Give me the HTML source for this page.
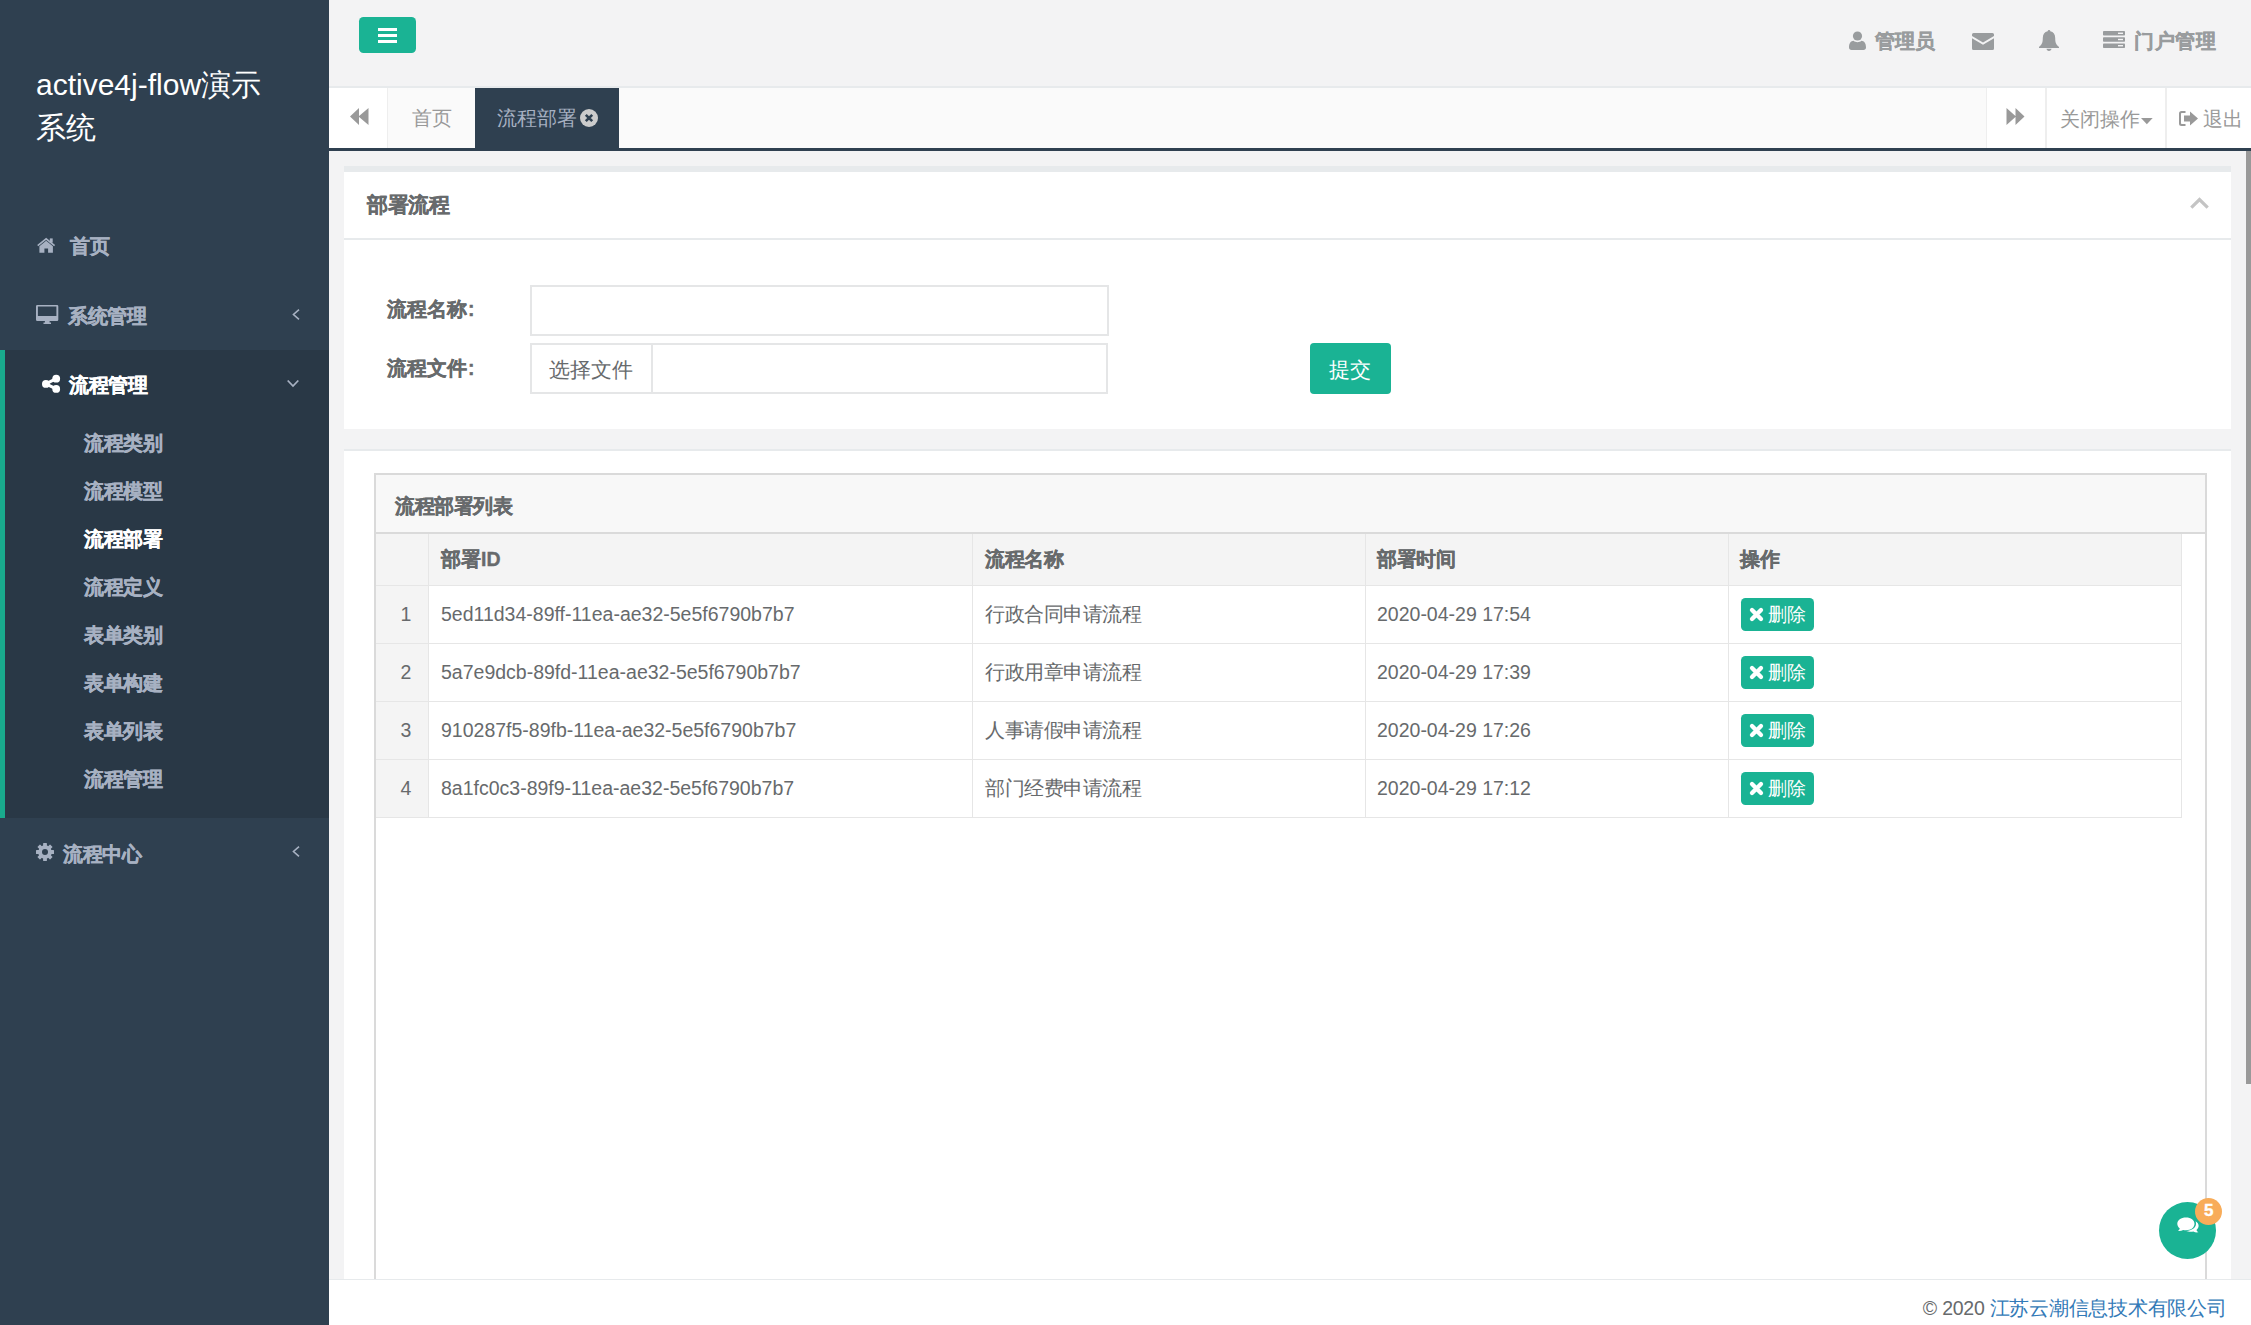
<!DOCTYPE html>
<html><head><meta charset="utf-8">
<style>
*{box-sizing:border-box;margin:0;padding:0}
html,body{width:2251px;height:1325px;overflow:hidden;background:#f3f3f4;font-family:"Liberation Sans",sans-serif;color:#676a6c;font-size:19.5px}
.a{position:absolute;white-space:nowrap;line-height:1}
.b{font-weight:bold;-webkit-text-stroke:0.35px}
.r{position:absolute}
svg{position:absolute;overflow:visible}
.nav{color:#a7b1c2;font-weight:bold;-webkit-text-stroke:0.35px;letter-spacing:-0.5px}
</style></head><body>
<!-- sidebar -->
<div class="r" style="left:0;top:0;width:329px;height:1325px;background:#2f4050"></div>
<div class="r" style="left:0;top:350px;width:329px;height:468px;background:#293846"></div>
<div class="r" style="left:0;top:350px;width:5px;height:468px;background:#19aa8d"></div>
<div class="a" style="left:36px;top:62.8px;font-size:30px;color:#fff;line-height:43px">active4j-flow演示<br>系统</div>

<!-- home icon -->
<svg style="left:36.6px;top:238.3px" width="19" height="15" viewBox="0 0 19 15"><path d="M0.7 7.7 L9.15 0.9 L17.6 7.7" fill="none" stroke="#a7b1c2" stroke-width="1.7"/><rect x="12.8" y="0.4" width="2.9" height="4.2" fill="#a7b1c2"/><path d="M2.4 8.2 L9.15 2.8 L15.9 8.2 V14.7 H11.1 V10.6 H7.4 V14.7 H2.4 Z" fill="#a7b1c2"/></svg>
<div class="a nav" style="left:70px;top:237px">首页</div>
<!-- desktop icon -->
<svg style="left:36px;top:304.7px" width="23" height="19" viewBox="0 0 23 19"><path d="M1.2 0 H21.1 A1.2 1.2 0 0 1 22.3 1.2 V14.7 A1.2 1.2 0 0 1 21.1 15.9 H13.6 V17.4 H15 V19 H7.5 V17.4 H8.9 V15.9 H1.2 A1.2 1.2 0 0 1 0 14.7 V1.2 A1.2 1.2 0 0 1 1.2 0 Z M1.9 1.5 V11 H20.4 V1.5 Z" fill="#a7b1c2"/></svg>
<div class="a nav" style="left:68px;top:306.5px">系统管理</div>
<svg style="left:292px;top:309px" width="8" height="11" viewBox="0 0 8 11"><path d="M7 0.7 L1.5 5.5 L7 10.3" fill="none" stroke="#a7b1c2" stroke-width="1.6"/></svg>
<!-- share icon -->
<svg style="left:42px;top:374px" width="18" height="19" viewBox="0 0 18 19"><circle cx="14.2" cy="4.7" r="3.9" fill="#fff"/><circle cx="3.9" cy="9.9" r="3.9" fill="#fff"/><circle cx="14.2" cy="14.9" r="3.9" fill="#fff"/><path d="M3.9 9.9 L14.2 4.7 M3.9 9.9 L14.2 14.9" stroke="#fff" stroke-width="3"/></svg>
<div class="a nav" style="left:69px;top:376px;color:#fff">流程管理</div>
<svg style="left:287px;top:379px" width="12" height="9" viewBox="0 0 12 9"><path d="M0.7 1.5 L6 7 L11.3 1.5" fill="none" stroke="#a7b1c2" stroke-width="1.8"/></svg>
<div class="a nav" style="left:84px;top:434px">流程类别</div>
<div class="a nav" style="left:84px;top:482px">流程模型</div>
<div class="a nav" style="left:84px;top:530px;color:#fff">流程部署</div>
<div class="a nav" style="left:84px;top:578px">流程定义</div>
<div class="a nav" style="left:84px;top:626px">表单类别</div>
<div class="a nav" style="left:84px;top:674px">表单构建</div>
<div class="a nav" style="left:84px;top:722px">表单列表</div>
<div class="a nav" style="left:84px;top:770px">流程管理</div>
<!-- gear -->
<svg style="left:36px;top:843px" width="18" height="18" viewBox="0 0 18 18"><g fill="#a7b1c2"><circle cx="9" cy="9" r="6.8"/><rect x="7.1" y="0" width="3.8" height="18" rx="0.5" transform="rotate(0 9 9)"/><rect x="7.1" y="0" width="3.8" height="18" rx="0.5" transform="rotate(45 9 9)"/><rect x="7.1" y="0" width="3.8" height="18" rx="0.5" transform="rotate(90 9 9)"/><rect x="7.1" y="0" width="3.8" height="18" rx="0.5" transform="rotate(135 9 9)"/></g><circle cx="9" cy="9" r="3" fill="#2f4050"/></svg>
<div class="a nav" style="left:63px;top:844.5px">流程中心</div>
<svg style="left:292px;top:846px" width="8" height="11" viewBox="0 0 8 11"><path d="M7 0.7 L1.5 5.5 L7 10.3" fill="none" stroke="#a7b1c2" stroke-width="1.6"/></svg>

<!-- top bar -->
<div class="r" style="left:329px;top:0;width:1922px;height:86px;background:#f3f3f4"></div>
<div class="r" style="left:329px;top:86px;width:1922px;height:2px;background:#e7eaec"></div>
<div class="r" style="left:359px;top:17px;width:57px;height:36px;background:#1ab394;border-radius:4.5px"></div>
<div class="r" style="left:378px;top:28px;width:19px;height:3.3px;background:#fff"></div>
<div class="r" style="left:378px;top:34px;width:19px;height:3.3px;background:#fff"></div>
<div class="r" style="left:378px;top:40px;width:19px;height:3.3px;background:#fff"></div>

<!-- top right -->
<svg style="left:1849px;top:31px" width="17" height="19" viewBox="0 0 17 19"><circle cx="8.5" cy="5" r="4.6" fill="#999c9e"/><path d="M0 16.5 C0 12 2 10 4.5 9.8 C5.8 10.8 7 11.2 8.5 11.2 C10 11.2 11.2 10.8 12.5 9.8 C15 10 17 12 17 16.5 C17 18 16 19 14.5 19 H2.5 C1 19 0 18 0 16.5 Z" fill="#999c9e"/></svg>
<div class="a b" style="left:1875px;top:31.5px;color:#999c9e">管理员</div>
<svg style="left:1972px;top:33px" width="22" height="17" viewBox="0 0 22 17"><path d="M1.5 0 H20.5 A1.5 1.5 0 0 1 22 1.5 V3 L11 9.5 L0 3 V1.5 A1.5 1.5 0 0 1 1.5 0 Z M0 5.2 L11 11.8 L22 5.2 V15.5 A1.5 1.5 0 0 1 20.5 17 H1.5 A1.5 1.5 0 0 1 0 15.5 Z" fill="#999c9e"/></svg>
<svg style="left:2039px;top:30px" width="20" height="21" viewBox="0 0 20 21"><path d="M10 0 C10.8 0 11.3 0.6 11.3 1.3 C14.5 1.9 16.2 4.5 16.2 8 C16.2 12.5 17 14.5 20 17 V18 H0 V17 C3 14.5 3.8 12.5 3.8 8 C3.8 4.5 5.5 1.9 8.7 1.3 C8.7 0.6 9.2 0 10 0 Z M7.5 18.8 H12.5 C12.5 20 11.4 21 10 21 C8.6 21 7.5 20 7.5 18.8 Z" fill="#999c9e"/></svg>
<svg style="left:2103px;top:31px" width="22" height="17" viewBox="0 0 22 17"><g fill="#999c9e"><rect x="0" y="0" width="22" height="4.6" rx="0.8"/><rect x="0" y="6.2" width="22" height="4.6" rx="0.8"/><rect x="0" y="12.4" width="22" height="4.6" rx="0.8"/></g><g fill="#f3f3f4"><rect x="15" y="1.6" width="5" height="1.4"/><rect x="15" y="7.8" width="5" height="1.4"/><rect x="15" y="14" width="5" height="1.4"/></g></svg>
<div class="a b" style="left:2134px;top:31.5px;color:#999c9e;letter-spacing:0.6px">门户管理</div>

<!-- tabs -->
<div class="r" style="left:329px;top:88px;width:1922px;height:60px;background:#fafafa"></div>
<div class="r" style="left:329px;top:88px;width:59px;height:60px;background:#fff;border-right:1.5px solid #eee"></div>
<svg style="left:350px;top:108px" width="19" height="17" viewBox="0 0 19 17"><path d="M0 8.5 L9 0 V17 Z M8.5 8.5 L18.5 0 V17 Z" fill="#999"/></svg>
<div class="a" style="left:412px;top:109px;color:#999">首页</div>
<div class="r" style="left:475px;top:88px;width:144px;height:60px;background:#2f4050"></div>
<div class="a" style="left:497px;top:109px;color:#a7b1c2">流程部署</div>
<svg style="left:580px;top:109px" width="18" height="18" viewBox="0 0 18 18"><circle cx="9" cy="9" r="9" fill="#ccc"/><path d="M5.8 5.8 L12.2 12.2 M12.2 5.8 L5.8 12.2" stroke="#2f4050" stroke-width="2.6"/></svg>
<div class="r" style="left:1986px;top:88px;width:265px;height:60px;background:#fff;border-left:1.5px solid #eee"></div>
<div class="r" style="left:2045px;top:88px;width:1.5px;height:60px;background:#eee"></div>
<div class="r" style="left:2165px;top:88px;width:1.5px;height:60px;background:#eee"></div>
<svg style="left:2006px;top:108px" width="19" height="17" viewBox="0 0 19 17"><path d="M0.5 0 L10 8.5 L0.5 17 Z M9.5 0 L18.5 8.5 L9.5 17 Z" fill="#999"/></svg>
<div class="a" style="left:2059.5px;top:109.5px;color:#999">关闭操作</div>
<svg style="left:2141px;top:117.8px" width="12" height="7" viewBox="0 0 12 7"><path d="M0 0 H11.7 L5.85 6.2 Z" fill="#999"/></svg>
<svg style="left:2179px;top:111px" width="19" height="15" viewBox="0 0 19 15"><path d="M6.5 0 H2.5 A2.5 2.5 0 0 0 0 2.5 V12.5 A2.5 2.5 0 0 0 2.5 15 H6.5 V13 H2.8 A0.8 0.8 0 0 1 2 12.2 V2.8 A0.8 0.8 0 0 1 2.8 2 H6.5 Z M11 0.5 L19 7.5 L11 14.5 V10.5 H5 V4.5 H11 Z" fill="#999"/></svg>
<div class="a" style="left:2203px;top:109.5px;color:#999">退出</div>
<div class="r" style="left:329px;top:148px;width:1922px;height:3px;background:#2f4050"></div>

<!-- panel 1 -->
<div class="r" style="left:344px;top:166px;width:1887px;height:6px;background:#e7eaec"></div>
<div class="r" style="left:344px;top:172px;width:1887px;height:257px;background:#fff"></div>
<div class="r" style="left:344px;top:238px;width:1887px;height:1.5px;background:#e7eaec"></div>
<div class="a b" style="left:367px;top:195px;font-size:20.5px;letter-spacing:-0.5px">部署流程</div>
<svg style="left:2190px;top:197px" width="19" height="12" viewBox="0 0 19 12"><path d="M1.3 10.7 L9.5 2.5 L17.7 10.7" fill="none" stroke="#c4c4c4" stroke-width="3.2"/></svg>
<div class="a b" style="left:387px;top:300px">流程名称<span style="margin-left:1px">:</span></div>
<div class="r" style="left:530px;top:285px;width:579px;height:51px;border:2px solid #e5e6e7"></div>
<div class="a b" style="left:387px;top:358.5px">流程文件<span style="margin-left:1px">:</span></div>
<div class="r" style="left:530px;top:343px;width:578px;height:51px;border:2px solid #e5e6e7"></div>
<div class="r" style="left:651px;top:343px;width:2px;height:51px;background:#e5e6e7"></div>
<div class="a" style="left:549px;top:358.5px;font-size:21px">选择文件</div>
<div class="r" style="left:1310px;top:343px;width:81px;height:51px;background:#1ab394;border-radius:4px"></div>
<div class="a" style="left:1329px;top:358.5px;color:#fff;font-size:21px">提交</div>

<!-- panel 2 -->
<div class="r" style="left:344px;top:449px;width:1887px;height:876px;background:#fff;border-top:2px solid #e7eaec"></div>
<div class="r" style="left:374px;top:473px;width:1833px;height:852px;border:2px solid #dadada;border-bottom:none"></div>
<div class="r" style="left:376px;top:475px;width:1829px;height:59px;background:#f8f8f8;border-bottom:2px solid #dadada"></div>
<div class="a b" style="left:395px;top:497px;letter-spacing:-0.5px">流程部署列表</div>
<div class="r" style="left:376px;top:534px;width:1806px;height:52px;background:#f4f4f4;border-bottom:1px solid #e6e6e6"></div>
<div class="r" style="left:376px;top:586px;width:52.5px;height:231.5px;background:#f4f4f4"></div>
<div class="r" style="left:376px;top:642.8px;width:1806px;height:1px;background:#e6e6e6"></div>
<div class="r" style="left:376px;top:700.8px;width:1806px;height:1px;background:#e6e6e6"></div>
<div class="r" style="left:376px;top:758.8px;width:1806px;height:1px;background:#e6e6e6"></div>
<div class="r" style="left:376px;top:816.7px;width:1806px;height:1px;background:#e6e6e6"></div>
<div class="r" style="left:427.8px;top:534px;width:1.3px;height:283.5px;background:#e6e6e6"></div>
<div class="r" style="left:972.1px;top:534px;width:1.3px;height:283.5px;background:#e6e6e6"></div>
<div class="r" style="left:1365.1px;top:534px;width:1.3px;height:283.5px;background:#e6e6e6"></div>
<div class="r" style="left:1728.1px;top:534px;width:1.3px;height:283.5px;background:#e6e6e6"></div>
<div class="r" style="left:2181px;top:534px;width:1.3px;height:283.5px;background:#e6e6e6"></div>
<div class="a b" style="left:441px;top:550px">部署ID</div>
<div class="a b" style="left:985px;top:550px;letter-spacing:-0.5px">流程名称</div>
<div class="a b" style="left:1377px;top:550px;letter-spacing:-0.5px">部署时间</div>
<div class="a b" style="left:1740px;top:550px;letter-spacing:-0.5px">操作</div>
<div class="a" style="left:400.5px;top:605px">1</div>
<div class="a" style="left:441px;top:605px">5ed11d34-89ff-11ea-ae32-5e5f6790b7b7</div>
<div class="a" style="left:985px;top:605px;letter-spacing:-0.5px">行政合同申请流程</div>
<div class="a" style="left:1377px;top:605px">2020-04-29 17:54</div>
<div class="r" style="left:1741px;top:598px;width:73px;height:33px;background:#1ab394;border-radius:4.5px"></div>
<svg style="left:1750px;top:608px" width="13" height="13" viewBox="0 0 13 13"><path d="M2 2 L11 11 M11 2 L2 11" stroke="#fff" stroke-width="4.3" stroke-linecap="round"/></svg>
<div class="a" style="left:1768px;top:604.5px;color:#fff;font-size:19px">删除</div>
<div class="a" style="left:400.5px;top:663px">2</div>
<div class="a" style="left:441px;top:663px">5a7e9dcb-89fd-11ea-ae32-5e5f6790b7b7</div>
<div class="a" style="left:985px;top:663px;letter-spacing:-0.5px">行政用章申请流程</div>
<div class="a" style="left:1377px;top:663px">2020-04-29 17:39</div>
<div class="r" style="left:1741px;top:656px;width:73px;height:33px;background:#1ab394;border-radius:4.5px"></div>
<svg style="left:1750px;top:666px" width="13" height="13" viewBox="0 0 13 13"><path d="M2 2 L11 11 M11 2 L2 11" stroke="#fff" stroke-width="4.3" stroke-linecap="round"/></svg>
<div class="a" style="left:1768px;top:662.5px;color:#fff;font-size:19px">删除</div>
<div class="a" style="left:400.5px;top:721px">3</div>
<div class="a" style="left:441px;top:721px">910287f5-89fb-11ea-ae32-5e5f6790b7b7</div>
<div class="a" style="left:985px;top:721px;letter-spacing:-0.5px">人事请假申请流程</div>
<div class="a" style="left:1377px;top:721px">2020-04-29 17:26</div>
<div class="r" style="left:1741px;top:714px;width:73px;height:33px;background:#1ab394;border-radius:4.5px"></div>
<svg style="left:1750px;top:724px" width="13" height="13" viewBox="0 0 13 13"><path d="M2 2 L11 11 M11 2 L2 11" stroke="#fff" stroke-width="4.3" stroke-linecap="round"/></svg>
<div class="a" style="left:1768px;top:720.5px;color:#fff;font-size:19px">删除</div>
<div class="a" style="left:400.5px;top:779px">4</div>
<div class="a" style="left:441px;top:779px">8a1fc0c3-89f9-11ea-ae32-5e5f6790b7b7</div>
<div class="a" style="left:985px;top:779px;letter-spacing:-0.5px">部门经费申请流程</div>
<div class="a" style="left:1377px;top:779px">2020-04-29 17:12</div>
<div class="r" style="left:1741px;top:772px;width:73px;height:33px;background:#1ab394;border-radius:4.5px"></div>
<svg style="left:1750px;top:782px" width="13" height="13" viewBox="0 0 13 13"><path d="M2 2 L11 11 M11 2 L2 11" stroke="#fff" stroke-width="4.3" stroke-linecap="round"/></svg>
<div class="a" style="left:1768px;top:778.5px;color:#fff;font-size:19px">删除</div>
<div class="r" style="left:329px;top:1279px;width:1922px;height:46px;background:#fff;border-top:1.5px solid #e7eaec"></div>
<div class="a" style="right:24.3px;top:1298.5px;letter-spacing:-0.25px">© 2020 <span style="color:#337ab7">江苏云潮信息技术有限公司</span></div>
<div class="r" style="left:2246px;top:151px;width:5px;height:1128px;background:#f3f3f4"></div>
<div class="r" style="left:2246px;top:151px;width:5px;height:933px;background:#999"></div>
<div class="r" style="left:2159px;top:1202px;width:57px;height:57px;border-radius:50%;background:#1ab394"></div>
<svg style="left:2177px;top:1217px" width="22" height="17" viewBox="0 0 22 17"><path d="M9 0.5 C14 0.5 17.5 3 17.5 6.8 C17.5 10.6 14 13.2 9 13.2 C8 13.2 7 13.1 6.2 12.9 C4.5 13.8 2.8 14.1 0.8 13.8 C2 13 2.6 12.2 2.8 11.4 C1.2 10.2 0.3 8.6 0.3 6.8 C0.3 3 4 0.5 9 0.5 Z" fill="#fff"/><path d="M18.6 4.2 C20.5 5.3 21.6 6.9 21.6 8.8 C21.6 10.4 20.8 11.8 19.5 12.9 C19.7 13.7 20.3 14.5 21.4 15.3 C19.5 15.6 17.8 15.3 16.3 14.4 C15.5 14.6 14.7 14.7 13.8 14.7 C12 14.7 10.4 14.2 9.2 13.9 C14.8 13.7 19 10.8 19 6.8 C19 5.9 18.9 5 18.6 4.2 Z" fill="#fff"/></svg>
<div class="r" style="left:2195px;top:1198px;width:27px;height:27px;border-radius:50%;background:#f8ac59"></div>
<div class="a b" style="left:2204px;top:1202px;color:#fff;font-size:17px">5</div>
</body></html>
